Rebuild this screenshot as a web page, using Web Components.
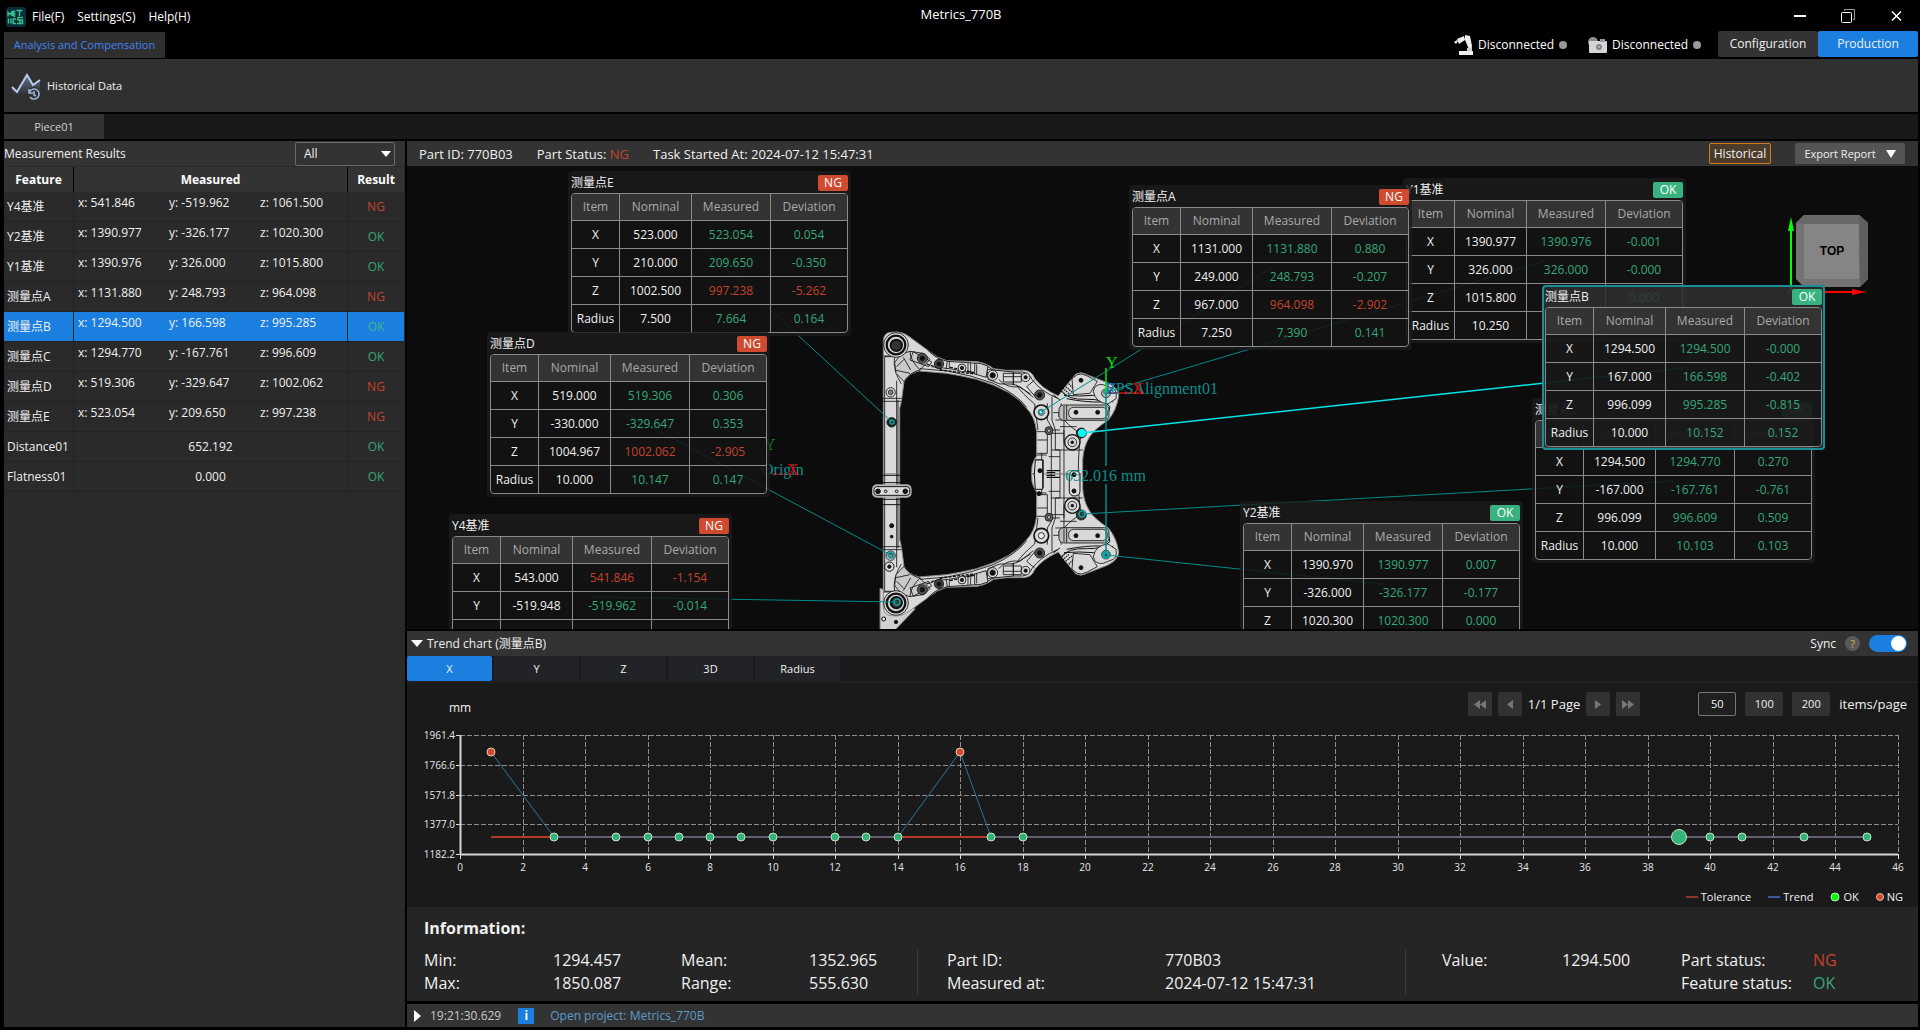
<!DOCTYPE html>
<html lang="en">
<head>
<meta charset="utf-8">
<title>Metrics_770B</title>
<style>
  html, body{
    margin: 0;
    height: 100%;
  }
  body{
    background: #000;
    color: #f0f0f0;
    font: 12px/16px "Open Sans", "Noto Sans CJK SC", sans-serif;
    --panel: #333;
    --blue: #1a7fdf;
    --ok: #34a877;
    --ng: #c5432c;
  }
</style>
</head>
<body>
<app-window>
  <title-bar slot="top">Metrics_770B</title-bar>
  <mode-bar slot="top"></mode-bar>
  <tool-ribbon slot="top">Historical Data</tool-ribbon>
  <piece-tabs slot="top">Piece01</piece-tabs>
  <result-list slot="side">Measurement Results</result-list>
  <part-bar slot="main"></part-bar>
  <scene-view slot="main"></scene-view>
  <trend-panel slot="main">Trend chart (测量点B)</trend-panel>
  <info-panel slot="main">Information:</info-panel>
  <status-bar slot="main">Open project: Metrics_770B</status-bar>
</app-window>

<script>
const baseStyle = `
  *{
    box-sizing: border-box;
  }
  button, select{
    font: inherit;
    color: inherit;
    border: 0;
    padding: 0;
    margin: 0;
    background: none;
  }
  .ok{ color: var(--ok); }
  .ng{ color: var(--ng); }
`;

function template(html){
  const t = document.createElement('template');
  t.innerHTML = '<style>' + baseStyle + '</style>' + html;
  return t;
}

class BaseElement extends HTMLElement{
  constructor(){
    super();
    this.attachShadow({mode: 'open'});
    this.shadowRoot.appendChild(this.constructor.template.content.cloneNode(true));
  }
  find(selector){
    return this.shadowRoot.querySelector(selector);
  }
}

/* ---------- window frame ---------- */
class AppWindow extends BaseElement{
  static template = template(`
    <style>
      :host{
        display: flex;
        flex-direction: column;
        height: 100vh;
        min-height: 800px;
        padding: 0 2px 3px 4px;
        box-sizing: border-box;
        overflow: hidden;
      }
      .body{
        flex: 1;
        min-height: 0;
        display: flex;
        gap: 2px;
      }
      .side{
        flex: 0 0 401px;
        display: flex;
        background: #2a2a2a;
      }
      .main{
        flex: 1;
        min-width: 0;
        display: flex;
        flex-direction: column;
      }
    </style>
    <slot name="top"></slot>
    <div class="body">
      <div class="side"><slot name="side"></slot></div>
      <div class="main"><slot name="main"></slot></div>
    </div>
  `);
}

class TitleBar extends BaseElement{
  static template = template(`
    <style>
      :host{
        display: grid;
        grid-template-columns: 1fr auto 1fr;
        align-items: center;
        height: 31px;
        color: #fff;
      }
      .menu{
        display: flex;
        align-items: center;
        gap: 13px;
        padding: 2px 0 0 2px;
      }
      .menu svg{
        margin-right: -7px;
      }
      .title{
        padding-bottom: 4px;
        font-size: 13px;
      }
      .win{
        display: flex;
        justify-content: flex-end;
        gap: 30px;
        padding-right: 13px;
      }
      .win button{
        display: flex;
        width: 18px;
        height: 18px;
      }
    </style>
    <nav class="menu">
      <svg width="20" height="20" viewBox="0 0 20 20" aria-label="Metrics">
        <rect width="20" height="20" rx="3" fill="#0a2e38"/>
        <g fill="none" stroke="#36c08c" stroke-width="1.5">
          <path d="M2 9.500V5.500l2 2 2-2.500v4M9.500 4.500H7.500v4.500h2M7.500 6.700h2M10.500 3.500h6M13.500 3.500v5.500"/>
          <path d="M2.500 11.500v5M4.500 12h1M5 12v4.500M10 12H7.200v4.500H10M17 10.500h-5v2.500h4.500v3.500h-5.500M14 13v3.500"/>
        </g>
      </svg>
      <button>File(F)</button>
      <button>Settings(S)</button>
      <button>Help(H)</button>
    </nav>
    <div class="title"><slot></slot></div>
    <div class="win">
      <button aria-label="Minimize"><svg width="18" height="18"><path d="M3 9h12" stroke="#fff" stroke-width="2"/></svg></button>
      <button aria-label="Restore"><svg width="18" height="18" fill="none"><path d="M5.500 4V2.500h10v10H14" stroke="#999"/><rect x="2.500" y="5.500" width="10" height="10" rx="1" stroke="#fff"/></svg></button>
      <button aria-label="Close"><svg width="18" height="18"><path d="M5 4.500l9 9M14 4.500l-9 9" stroke="#fff" stroke-width="1.500"/></svg></button>
    </div>
  `);
}

class ModeBar extends BaseElement{
  static template = template(`
    <style>
      :host{
        display: flex;
        align-items: stretch;
        height: 28px;
      }
      .tab{
        width: 161px;
        height: 26px;
        margin-top: 1px;
        background: #2f2f2f;
        color: #4083f5;
        font-size: 11px;
      }
      .devices{
        margin-left: auto;
        display: flex;
        align-items: center;
        gap: 21px;
        padding-right: 17px;
        color: #fff;
      }
      .device{
        display: flex;
        align-items: center;
        gap: 5px;
      }
      .device i{
        width: 8px;
        height: 8px;
        border-radius: 50%;
        background: #999;
      }
      .mode{
        width: 100px;
        height: 26px;
        background: var(--panel);
        border-radius: 2px;
      }
      .mode.on{
        background: var(--blue);
      }
    </style>
    <button class="tab">Analysis and Compensation</button>
    <div class="devices">
      <div class="device">
        <svg width="19" height="20" viewBox="0 0 19 20" fill="#eee">
          <path d="M11 0l5 1 2 10-4 1-3-7z"/><path d="M3 4l7-3 1 4-6 4z"/><path d="M0 7l3-2 1 1-2 3z"/>
          <circle cx="16" cy="12" r="2"/><path d="M13 13h5v3h-5z" fill="#ccc"/><path d="M5 16h14v4H5z"/>
        </svg>
        Disconnected<i></i>
      </div>
      <div class="device">
        <svg width="19" height="18" viewBox="0 0 19 18">
          <circle cx="5" cy="6" r="5" fill="#8d8d8d"/><rect x="1" y="5" width="18" height="12" rx="1" fill="#d5d5d5"/>
          <rect x="12" y="3" width="5" height="3" fill="#999"/><circle cx="11" cy="11" r="3" fill="#858585"/><circle cx="11" cy="11" r="1" fill="#bbb"/>
        </svg>
        Disconnected<i></i>
      </div>
    </div>
    <button class="mode">Configuration</button>
    <button class="mode on">Production</button>
  `);
}

class ToolRibbon extends BaseElement{
  static template = template(`
    <style>
      :host{
        display: flex;
        align-items: center;
        height: 53px;
        background: #303030;
      }
      button{
        display: flex;
        align-items: center;
        gap: 6px;
        padding-left: 7px;
        font-size: 11px;
      }
    </style>
    <button>
      <svg width="30" height="28" viewBox="0 0 30 28" fill="none">
        <linearGradient id="g" x1="0" y1="0" x2="0" y2="1"><stop offset="0" stop-color="#7f9cc8" stop-opacity=".6"/><stop offset="1" stop-color="#7f9cc8" stop-opacity="0"/></linearGradient>
        <path d="M1 15l5 5 10-17 6 11 7-6v15H1z" fill="url(#g)"/>
        <path d="M1 15l5 5L16 3l6 10 7-5" stroke="#b9cdf0" stroke-width="2"/>
        <circle cx="23" cy="22" r="7" fill="#303030"/>
        <path d="M18.500 20a5 5 0 1 1 .5 5M18 17v4h4M23 19v4l2 1" stroke="#9db6e0" stroke-width="1.600"/>
      </svg>
      <slot></slot>
    </button>
  `);
}

class PieceTabs extends BaseElement{
  static template = template(`
    <style>
      :host{
        display: block;
        height: 25px;
        margin: 2px 0;
        background: #191919;
      }
      button{
        width: 100px;
        height: 25px;
        background: var(--panel);
        color: #d0d0d0;
        font-size: 11px;
      }
    </style>
    <button><slot></slot></button>
  `);
}

/* ---------- left column ---------- */
const results = [
  ['Y4基准', '541.846', '-519.962', '1061.500', 'NG'],
  ['Y2基准', '1390.977', '-326.177', '1020.300', 'OK'],
  ['Y1基准', '1390.976', '326.000', '1015.800', 'OK'],
  ['测量点A', '1131.880', '248.793', '964.098', 'NG'],
  ['测量点B', '1294.500', '166.598', '995.285', 'OK'],
  ['测量点C', '1294.770', '-167.761', '996.609', 'OK'],
  ['测量点D', '519.306', '-329.647', '1002.062', 'NG'],
  ['测量点E', '523.054', '209.650', '997.238', 'NG'],
  ['Distance01', '652.192', 'OK'],
  ['Flatness01', '0.000', 'OK']
];

class ResultList extends BaseElement{
  static template = template(`
    <style>
      :host{
        flex: 1;
        display: block;
      }
      header{
        display: flex;
        align-items: center;
        justify-content: space-between;
        height: 25px;
        padding-right: 10px;
        background: var(--panel);
      }
      .pick{
        position: relative;
        display: flex;
      }
      select{
        appearance: none;
        width: 100px;
        height: 24px;
        padding-left: 8px;
        border: 1px solid #6a6a6a;
        border-radius: 2px;
        background: var(--panel);
      }
      .pick svg{
        position: absolute;
        right: 4px;
        top: 9px;
        pointer-events: none;
      }
      table{
        width: 400px;
        border-collapse: separate;
        border-spacing: 0;
        table-layout: fixed;
        margin-top: 1px;
      }
      th{
        height: 25px;
        padding: 0;
        background: var(--panel);
        border-right: 1px solid #000;
        color: #fff;
      }
      td{
        height: 30px;
        padding: 0 0 0 3px;
        border-right: 1px solid #222;
        border-bottom: 1px solid #222;
      }
      th:last-child, td:last-child{
        border-right: 0;
      }
      td:last-child, td.one{
        padding: 0;
        text-align: center;
      }
      .xyz{
        display: grid;
        grid-template-columns: 91px 91px 1fr;
        height: 29px;
        padding: 3px 0 0 1px;
      }
      tr.on td{
        background: var(--blue);
        background-clip: padding-box;
      }
      tr.on .ok{
        color: #3dbb88;
      }
    </style>
    <header>
      <label for="filter"><slot></slot></label>
      <span class="pick">
        <select id="filter"><option>All</option></select>
        <svg width="10" height="6"><path d="M0 0h10L5 6z" fill="#fff"/></svg>
      </span>
    </header>
    <table>
      <colgroup><col style="width:70px"><col style="width:274px"><col></colgroup>
      <thead><tr><th>Feature</th><th>Measured</th><th>Result</th></tr></thead>
      <tbody></tbody>
    </table>
  `);

  connectedCallback(){
    this.find('tbody').innerHTML = results.map((r) => {
      const state = r[r.length - 1];
      const value = r.length === 5
        ? `<td><div class="xyz"><span>x: ${r[1]}</span><span>y: ${r[2]}</span><span>z: ${r[3]}</span></div></td>`
        : `<td class="one">${r[1]}</td>`;
      return `<tr class="${r[0] === '测量点B' ? 'on' : ''}"><td>${r[0]}</td>${value}<td class="${state.toLowerCase()}">${state}</td></tr>`;
    }).join('');
  }
}

/* ---------- part header ---------- */
class PartBar extends BaseElement{
  static template = template(`
    <style>
      :host{
        display: flex;
        align-items: center;
        height: 25px;
        padding: 0 13px 0 12px;
        gap: 24px;
        background: var(--panel);
        font-size: 13px;
      }
      .hist{
        margin-left: auto;
        width: 62px;
        height: 21px;
        font-size: 12px;
        line-height: 19px;
        text-align: center;
        border: 1px solid #d07a1c;
        border-radius: 2px;
        background: #4c3b2b;
      }
      button{
        display: flex;
        align-items: center;
        justify-content: center;
        gap: 10px;
        width: 110px;
        height: 21px;
        font-size: 11px;
        background: #545454;
        border-radius: 2px;
      }
    </style>
    <span>Part ID: 770B03</span>
    <span>Part Status: <span class="ng">NG</span></span>
    <span>Task Started At: 2024-07-12 15:47:31</span>
    <span class="hist">Historical</span>
    <button>Export Report <svg width="10" height="8"><path d="M0 0h10L5 8z" fill="#fff"/></svg></button>
  `);
}

/* ---------- 3D scene ---------- */
class FeatureCard extends BaseElement{
  static template = template(`
    <style>
      :host{
        position: absolute;
        display: block;
        width: 283px;
        padding: 0 3px 3px;
        box-sizing: border-box;
        border-radius: 4px;
        background: rgba(28, 28, 28, .8);
      }
      :host([selected]){
        background: rgba(48, 48, 48, .86);
        box-shadow: inset 0 0 0 2px #188f94;
      }
      header{
        display: flex;
        align-items: center;
        justify-content: space-between;
        height: 22px;
        padding-top: 1px;
      }
      .badge{
        width: 30px;
        border-radius: 2px;
        text-align: center;
        color: #fff;
        background: #d04a30;
      }
      .badge.good{
        background: #3ab27f;
      }
      .frame{
        border: 1px solid #8a8a8a;
        border-radius: 4px;
        overflow: hidden;
      }
      table{
        width: 100%;
        border-collapse: separate;
        border-spacing: 0;
        table-layout: fixed;
        text-align: center;
      }
      th{
        height: 26px;
        padding: 0;
        font-weight: normal;
        color: #a9a9a9;
        background: var(--panel);
      }
      td{
        height: 28px;
        padding: 0;
        border-top: 1px solid #8a8a8a;
        background: rgba(8, 8, 8, .35);
      }
      :host([selected]) td{
        background: rgba(12, 12, 12, .6);
      }
      th + th, td + td{
        border-left: 1px solid #8a8a8a;
      }
    </style>
    <header><slot></slot><span class="badge"></span></header>
    <div class="frame">
      <table>
        <colgroup><col style="width:47px"><col style="width:72px"><col style="width:79px"><col></colgroup>
        <thead><tr><th>Item</th><th>Nominal</th><th>Measured</th><th>Deviation</th></tr></thead>
        <tbody></tbody>
      </table>
    </div>
  `);

  set data(card){
    this.textContent = card.name;
    const badge = this.find('.badge');
    badge.textContent = card.state;
    badge.classList.toggle('good', card.state === 'OK');
    this.toggleAttribute('selected', !!card.selected);
    this.style.left = card.x + 'px';
    this.style.top = card.y + 'px';
    this.find('tbody').innerHTML = card.rows.map((row) => {
      const [item, nominal, measured, deviation, bad] = row;
      const cls = bad ? 'ng' : 'ok';
      return `<tr><td>${item}</td><td>${nominal}</td><td class="${cls}">${measured}</td><td class="${cls}">${deviation}</td></tr>`;
    }).join('');
  }
}

// x, y: card corner in the scene; to: the point on the part the leader ends at
const cards = [
  {name: '测量点E', state: 'NG', x: 161, y: 5, to: [485, 256], rows: [
    ['X', '523.000', '523.054', '0.054'], ['Y', '210.000', '209.650', '-0.350'],
    ['Z', '1002.500', '997.238', '-5.262', true], ['Radius', '7.500', '7.664', '0.164']]},
  {name: '测量点D', state: 'NG', x: 80, y: 166, to: [484, 389], rows: [
    ['X', '519.000', '519.306', '0.306'], ['Y', '-330.000', '-329.647', '0.353'],
    ['Z', '1004.967', '1002.062', '-2.905', true], ['Radius', '10.000', '10.147', '0.147']]},
  {name: 'Y4基准', state: 'NG', x: 42, y: 348, to: [490, 436], rows: [
    ['X', '543.000', '541.846', '-1.154', true], ['Y', '-519.948', '-519.962', '-0.014'],
    ['', '', '', ''], ['', '', '', '']]},
  {name: 'Y1基准', state: 'OK', x: 996, y: 12, to: [699, 226], rows: [
    ['X', '1390.977', '1390.976', '-0.001'], ['Y', '326.000', '326.000', '-0.000'],
    ['Z', '1015.800', '', '0.000'], ['Radius', '10.250', '', '']]},
  {name: '测量点A', state: 'NG', x: 722, y: 19, to: [634, 246], rows: [
    ['X', '1131.000', '1131.880', '0.880'], ['Y', '249.000', '248.793', '-0.207'],
    ['Z', '967.000', '964.098', '-2.902', true], ['Radius', '7.250', '7.390', '0.141']]},
  {name: 'Y2基准', state: 'OK', x: 833, y: 335, to: [699, 389], rows: [
    ['X', '1390.970', '1390.977', '0.007'], ['Y', '-326.000', '-326.177', '-0.177'],
    ['Z', '1020.300', '1020.300', '0.000'], ['', '', '', '']]},
  {name: '测量点C', state: 'OK', x: 1125, y: 232, to: [675, 348], rows: [
    ['X', '1294.500', '1294.770', '0.270'], ['Y', '-167.000', '-167.761', '-0.761'],
    ['Z', '996.099', '996.609', '0.509'], ['Radius', '10.000', '10.103', '0.103']]},
  {name: '测量点B', state: 'OK', x: 1135, y: 119, to: [675, 267], selected: true, rows: [
    ['X', '1294.500', '1294.500', '-0.000'], ['Y', '167.000', '166.598', '-0.402'],
    ['Z', '996.099', '995.285', '-0.815'], ['Radius', '10.000', '10.152', '0.152']]}
];

class SceneView extends BaseElement{
  static template = template(`
    <style>
      :host{
        flex: 1;
        min-height: 0;
        display: block;
        position: relative;
        overflow: hidden;
        background: #0c0c0c;
      }
      svg{
        position: absolute;
        left: 0;
        top: 0;
      }
      .cube{
        left: auto;
        right: 41px;
        top: 44px;
      }
      text{
        font: 16px "Liberation Serif", serif;
      }
      .cube text{
        font: bold 12px "Liberation Sans", sans-serif;
      }
    </style>
    <svg width="1510" height="464">
      <defs>
        <g id="half" stroke="#111" stroke-width="2.500" fill="#d9d9d9" stroke-linejoin="round">
          <!-- frame outline -->
          <path d="M70 462V62Q72 38 92 37L112 36Q135 38 150 52L205 92Q230 114 260 122L352 125Q385 132 400 146L440 151H490Q515 152 524 175Q545 205 595 228L612 205L648 162Q664 154 680 164L742 188Q776 205 776 228Q770 270 745 300Q700 330 688 352Q670 380 668 420V462H515L516 440Q520 420 530 408V335Q525 290 500 265Q480 238 445 217Q400 192 350 178Q300 166 260 160L178 153Q148 158 132 185L124 245L119 265V462Z" stroke="#8e8e8e" stroke-width="3"/>
          <path d="M74 462V110H104Q100 130 106 150Q112 175 124 192M110 182V462M114 240V462M70 108H110M66 235H124M66 244H124" fill="none"/>
          <path d="M104 128Q120 100 150 94L190 100L210 118L180 150Q150 156 132 185L108 160Z" fill="#c9c9c9"/>
          <path d="M130 112L152 150M150 94Q150 120 180 150M110 140L132 118M104 150L150 160" fill="none"/>
          <path d="M205 92Q230 118 262 124L352 130Q380 134 400 150L440 156H488Q508 160 516 178Q540 212 592 235M180 146L262 153Q330 164 400 190Q470 222 500 262M215 140L268 146L345 160L470 196L512 222" fill="none"/>
          <path d="M200 132L250 150M240 150L345 162M270 142L380 166" fill="none" stroke-dasharray="9 4" stroke-width="4"/>
          <path d="M160 95L215 126L206 140L150 120Z" fill="none"/>
          <path d="M262 124L258 148M268 126V146M324 128V160M332 128V162M344 130V162L378 172L384 138L360 130ZM350 134V164" fill="#cfcfcf"/>
          <path d="M382 148L420 152L460 156V192H420L384 178Z"/>
          <path d="M430 160H484V186H430ZM430 170H484M460 158V196" fill="none"/>
          <path d="M416 178Q440 206 480 200L520 232M470 196Q486 220 524 252M524 180L500 200L526 230M524 252Q530 300 534 330" fill="none"/>
          <path d="M530 335H562V400H532M532 360H562M545 400V462M524 420H550V462H520M562 250V300L574 320V462M576 230V300L586 330V390M586 300H612V462M586 390H600V462M600 320H650M604 250L596 290M612 300Q640 330 664 340M612 330V370M664 340Q655 380 655 462M580 278H620M562 330H600M574 390H668M566 410H600M574 340H612M530 405H560" fill="none"/>
          <path d="M560 452H600M560 458H586" fill="none" stroke-width="4"/>
          <path d="M604 212Q620 240 680 238Q730 236 750 260L740 300M612 226Q660 230 700 226Q740 224 760 246M620 236Q680 248 730 246M600 240L580 225" fill="none" stroke-width="3"/>
          <path d="M600 210L622 228M608 204L628 222M612 196L636 216M622 186L640 206" fill="none" stroke-width="4" stroke-dasharray="4 3"/>
          <path d="M636 176L652 164Q664 158 682 168L712 184L690 220L640 224Z"/>
          <path d="M700 214Q704 190 730 194L760 206Q772 214 768 236L744 252Q706 248 700 214Z"/>
          <!-- slotted plate -->
          <rect x="597" y="255" width="150" height="46" rx="14" fill="#bdbdbd"/>
          <rect x="626" y="262" width="116" height="34" rx="15"/>
          <path d="M612 258V298M620 256V300" fill="none"/>
          <!-- bushings and bolts -->
          <circle cx="108" cy="75" r="37"/>
          <circle cx="108" cy="75" r="28" stroke-width="7"/>
          <circle cx="109" cy="76" r="17" fill="#333" stroke-width="6"/>
          <circle cx="187" cy="115" r="15" fill="#555"/><circle cx="187" cy="115" r="7" fill="#111"/>
          <circle cx="237" cy="132" r="14" fill="#444"/><circle cx="237" cy="132" r="6" fill="#111"/>
          <circle cx="306" cy="144" r="12"/><circle cx="306" cy="144" r="5" fill="#222"/>
          <circle cx="398" cy="166" r="15"/><circle cx="398" cy="166" r="8" fill="#111"/>
          <circle cx="497" cy="172" r="13"/><circle cx="497" cy="172" r="5" fill="#111"/>
          <circle cx="539" cy="225" r="15" fill="#555"/><circle cx="539" cy="225" r="7" fill="#111"/>
          <circle cx="544" cy="277" r="22" stroke-width="5"/><circle cx="544" cy="277" r="9" fill="#eee"/>
          <circle cx="567" cy="332" r="12" fill="#666"/><circle cx="567" cy="332" r="5" fill="#ccc"/>
          <circle cx="648" cy="277" r="6" fill="#111"/><circle cx="713" cy="277" r="6" fill="#111"/>
          <circle cx="664" cy="339" r="15" fill="#333"/>
          <circle cx="637" cy="367" r="23" stroke-width="4"/><circle cx="637" cy="367" r="13"/><circle cx="637" cy="367" r="4" fill="#111"/>
          <circle cx="663" cy="181" r="6" fill="#111"/>
          <circle cx="738" cy="220" r="13" fill="#bbb"/>
          <circle cx="92" cy="217" r="14"/><circle cx="92" cy="217" r="7" fill="#888"/>
        </g>
      </defs>
      <g transform="translate(453 154) scale(.3333)">
        <path d="M60 805V930H105L165 868L130 830Z" fill="#d0d0d0" stroke="#777" stroke-width="3"/>
        <use href="#half"/>
        <use href="#half" transform="translate(0 924) scale(1 -1)"/>
        <g stroke="#111" stroke-width="3" fill="#dcdcdc">
          <path d="M66 466H120M66 488H122M66 538H122M66 554H120"/>
          <rect x="38" y="495" width="115" height="36" rx="12" stroke="#aaa" stroke-width="4"/>
          <rect x="42" y="500" width="107" height="26" rx="8"/>
          <rect x="628" y="452" width="32" height="76" rx="14"/>
          <circle cx="54" cy="514" r="7" fill="#111"/><circle cx="136" cy="514" r="7" fill="#111"/>
          <circle cx="77" cy="514" r="4"/><circle cx="110" cy="514" r="4"/>
          <path d="M526 420Q520 462 526 508H548V420Z"/>
          <circle cx="540" cy="452" r="6" fill="#111"/><circle cx="537" cy="521" r="6" fill="#111"/>
          <circle cx="642" cy="464" r="6" fill="#111"/><circle cx="642" cy="513" r="6" fill="#111"/>
          <circle cx="95" cy="307" r="14" fill="#222"/><circle cx="95" cy="617" r="6" fill="#111"/>
          <circle cx="95" cy="650" r="4" fill="#111"/>
          <circle cx="88" cy="740" r="14"/><circle cx="88" cy="740" r="5" fill="#111"/>
          <circle cx="71" cy="897" r="6"/><circle cx="108" cy="906" r="5" fill="#111"/>
        </g>
      </g>
      <g class="leaders" fill="none" stroke="#008b8b"></g>
      <path d="M699 226V300M699 318V389" stroke="#008b8b" stroke-width="1.500"/>
      <g fill="#12a0a0">
        <circle cx="675" cy="267" r="4" fill="#00ffff"/>
        <circle cx="699" cy="389" r="4"/><circle cx="699" cy="389" r="1" fill="#033"/>
      </g>
      <g fill="none" stroke="#12a0a0" stroke-width="1.500">
        <circle cx="485" cy="256" r="2"/><circle cx="484" cy="389" r="3"/><circle cx="490" cy="436" r="3"/>
        <circle cx="634" cy="246" r="2"/><circle cx="675" cy="348" r="3"/><circle cx="699" cy="226" r="2"/>
      </g>
      <g fill="#0d8c8c">
        <text x="658" y="315">652.016 mm</text>
        <path d="M699 202V227" stroke="#00e000" stroke-width="1.500"/>
        <path d="M699 227H732" stroke="#e00000" stroke-width="1.500"/>
        <text x="699" y="202" fill="#00e000">Y</text>
        <text x="700" y="228" fill="#2040e0">Z</text>
        <text x="698" y="228">RPSAlignment01</text>
        <text x="725" y="228" fill="#e00000">X</text>
        <path d="M355 284V304" stroke="#008000"/>
        <path d="M365 308H385" stroke="#e00000"/>
        <text x="357" y="284" fill="#0c9c0c">Y</text>
        <text x="355" y="309">Origin</text>
        <text x="380" y="309" fill="#e00000">X</text>
      </g>
    </svg>
    <svg class="cube" width="90" height="90">
      <path d="M17 5H72L81 13V69L73 77H17L9 69V13Z" fill="#737373"/>
      <path d="M17 5H72L81 13L73 14H17L9 13Z" fill="#686868"/>
      <path d="M72 5L81 13V69L73 77Z" fill="#5f5f5f"/>
      <rect x="17" y="14" width="55" height="55" fill="#858585"/>
      <text x="45" y="45" text-anchor="middle" fill="#000">TOP</text>
      <path d="M4 82H75" stroke="#f00" stroke-width="2"/><path d="M65 79L79 82L65 85Z" fill="#f00"/>
      <path d="M4 81V15" stroke="#0f0" stroke-width="2"/><path d="M1 21L4 7L7 21Z" fill="#0f0"/>
      <circle cx="3" cy="82" r="3" fill="#2a2a5c"/>
    </svg>
  `);

  connectedCallback(){
    this.find('.leaders').innerHTML = cards.map((c) =>
      `<path d="M${c.x + 142} ${c.y + 83}L${c.to[0]} ${c.to[1]}"${c.selected ? ' stroke="#00e5e5" stroke-width="1.500"' : ''}/>`
    ).join('');
    cards.forEach((c) => {
      const card = document.createElement('feature-card');
      card.data = c;
      this.shadowRoot.appendChild(card);
    });
  }
}

/* ---------- trend ---------- */
class TrendPanel extends BaseElement{
  static template = template(`
    <style>
      :host{
        display: block;
        margin-top: 2px;
        background: #1a1a1a;
      }
      header{
        display: flex;
        align-items: center;
        gap: 4px;
        height: 25px;
        padding: 0 11px 0 4px;
        background: var(--panel);
      }
      .sync{
        display: flex;
        align-items: center;
        gap: 9px;
        margin-left: auto;
      }
      .help{
        width: 15px;
        height: 15px;
        border-radius: 50%;
        background: #5a5a5a;
        color: #e0b040;
        font-size: 11px;
        line-height: 15px;
      }
      input{
        appearance: none;
        display: flex;
        align-items: center;
        justify-content: flex-end;
        width: 38px;
        height: 17px;
        margin: 0;
        padding: 1px;
        border-radius: 9px;
        background: var(--blue);
      }
      input::before{
        content: "";
        width: 15px;
        height: 15px;
        border-radius: 50%;
        background: #fff;
      }
      nav{
        display: flex;
        gap: 2px;
        height: 27px;
        border-bottom: 2px solid #202020;
      }
      nav button{
        width: 85px;
        height: 25px;
        background: #222327;
        font-size: 11px;
      }
      nav .on{
        background: var(--blue);
        border-radius: 2px;
      }
    </style>
    <header>
      <svg width="12" height="8"><path d="M0 0h12L6 7z" fill="#fff"/></svg>
      <slot></slot>
      <div class="sync">
        <label for="sync">Sync</label>
        <button class="help">?</button>
        <input type="checkbox" id="sync" checked>
      </div>
    </header>
    <nav>
      <button class="on">X</button><button>Y</button><button>Z</button><button>3D</button><button>Radius</button>
    </nav>
    <trend-chart></trend-chart>
  `);
}

class TrendChart extends BaseElement{
  static template = template(`
    <style>
      :host{
        display: block;
        height: 224px;
        padding-top: 9px;
        box-sizing: border-box;
      }
      .tools{
        display: flex;
        align-items: center;
        height: 24px;
        padding: 0 11px 0 42px;
        font-size: 13px;
      }
      .unit{
        align-self: flex-end;
        font-size: 12px;
      }
      .pages{
        display: flex;
        align-items: center;
        gap: 6px;
        margin-left: auto;
        margin-right: 58px;
      }
      .pages button{
        display: flex;
        align-items: center;
        justify-content: center;
        width: 24px;
        height: 24px;
        border-radius: 2px;
        background: #323232;
      }
      .sizes{
        display: flex;
        align-items: center;
        gap: 9px;
      }
      .sizes button{
        width: 38px;
        height: 24px;
        border-radius: 2px;
        background: #323232;
        font-size: 11px;
      }
      .sizes .on{
        border: 1px solid #777;
        background: #1f1f1f;
      }
      .plot{
        display: block;
        width: 100%;
        height: 173px;
      }
      .plot text{
        font-size: 10px;
        fill: #e6e6e6;
      }
      .legend{
        display: flex;
        justify-content: flex-end;
        gap: 17px;
        padding-right: 15px;
        font-size: 11px;
        height: 16px;
      }
      .legend span{
        display: flex;
        align-items: center;
        gap: 3px;
      }
    </style>
    <div class="tools">
      <span class="unit">mm</span>
      <div class="pages">
        <button aria-label="First page"><svg width="12" height="9" fill="#777"><path d="M6 0v9L0 4.500zM12 0v9L6 4.500z"/></svg></button>
        <button aria-label="Previous page"><svg width="6" height="9" fill="#777"><path d="M6 0v9L0 4.500z"/></svg></button>
        <span>1/1 Page</span>
        <button aria-label="Next page"><svg width="6" height="9" fill="#777"><path d="M0 0v9l6-4.500z"/></svg></button>
        <button aria-label="Last page"><svg width="12" height="9" fill="#777"><path d="M0 0v9l6-4.500zM6 0v9l6-4.500z"/></svg></button>
      </div>
      <div class="sizes">
        <button class="on">50</button><button>100</button><button>200</button><span>items/page</span>
      </div>
    </div>
    <svg class="plot"></svg>
    <div class="legend">
      <span><svg width="12" height="2"><path d="M0 1h12" stroke="#8c3528" stroke-width="2"/></svg>Tolerance</span>
      <span><svg width="12" height="2"><path d="M0 1h12" stroke="#3c5aa0" stroke-width="2"/></svg>Trend</span>
      <span><svg width="10" height="10"><circle cx="5" cy="5" r="4" fill="#0f0" stroke="#bfe8bf"/></svg>OK</span>
      <span><svg width="8" height="10"><circle cx="4" cy="5" r="3.500" fill="#d04a30" stroke="#e8c0a8"/></svg>NG</span>
    </div>
  `);

  connectedCallback(){
    this.draw();
    window.addEventListener('resize', () => this.draw());
  }

  draw(){
    const svg = this.find('.plot');
    const left = 53;
    const right = svg.clientWidth - 20;
    const ticks = ['1961.4', '1766.6', '1571.8', '1377.0', '1182.2'];
    const rows = [19, 49, 79, 108, 138];
    const x = (n) => Math.round(left + (right - left) * n / 46);
    const ok = 121;
    const ng = 36;
    let out = '';

    ticks.forEach((label, i) => {
      out += `<text x="${left - 5}" y="${rows[i] + 4}" text-anchor="end">${label}</text>`;
      out += `<path d="M${left - 4} ${rows[i] + .5}H${left}" stroke="#ddd"/>`;
      if (i < 4){
        out += `<path d="M${left} ${rows[i] + .5}H${right}" stroke="#8c8c8c" stroke-dasharray="5 2"/>`;
      }
    });
    for (let n = 0; n <= 46; n += 2){
      if (n){
        out += `<path d="M${x(n) + .5} 19V138" stroke="#8c8c8c" stroke-dasharray="5 2"/>`;
      }
      out += `<path d="M${x(n) + .5} 138V143" stroke="#ddd"/>`;
      out += `<text x="${x(n)}" y="155" text-anchor="middle">${n}</text>`;
    }
    out += `<path d="M${left + .5} 19V138M${left} 138.5H${right}" stroke="#d5d5d5" stroke-width="2"/>`;
    out += `<path d="M${x(1)} ${ok}H${x(3)}M${x(14)} ${ok}H${x(17)}" stroke="#b23a28" stroke-width="2"/>`;
    out += `<path d="M${x(3)} ${ok}H${x(14)}M${x(17)} ${ok}H${x(45)}" stroke="#635e74" stroke-width="2"/>`;
    out += `<path d="M${x(1)} ${ng}L${x(3)} ${ok}M${x(14)} ${ok}L${x(16)} ${ng}L${x(17)} ${ok}" fill="none" stroke="#2a76a2"/>`;
    [3, 5, 6, 7, 8, 9, 10, 12, 13, 14, 17, 18, 39, 40, 41, 43, 45].forEach((n) => {
      out += `<circle cx="${x(n)}" cy="${ok}" r="${n === 39 ? 7.5 : 4}" fill="#34b27c" stroke="#c5e5b8"/>`;
    });
    [1, 16].forEach((n) => {
      out += `<circle cx="${x(n)}" cy="${ng}" r="4" fill="#d04a30" stroke="#ecd0a8"/>`;
    });
    svg.innerHTML = out;
  }
}

/* ---------- statistics ---------- */
class InfoPanel extends BaseElement{
  static template = template(`
    <style>
      :host{
        display: block;
        height: 94px;
        padding-top: 10px;
        box-sizing: border-box;
        background: #252525;
        font-size: 16px;
        line-height: 23px;
      }
      h2{
        margin: 0 0 9px 17px;
        font: inherit;
        font-weight: bold;
      }
      .row{
        display: grid;
        grid-template-columns: 510fr 488fr 513fr;
      }
      section{
        display: grid;
        height: 46px;
      }
      section + section{
        border-left: 1px solid #383838;
      }
      .stat{
        padding-left: 17px;
        grid-template-columns: 129px 128px 128px 1fr;
      }
      .part{
        padding-left: 29px;
        grid-template-columns: 218px 1fr;
      }
      .state{
        padding-left: 36px;
        grid-template-columns: 120px 119px 132px 1fr;
      }
    </style>
    <h2><slot></slot></h2>
    <div class="row">
      <section class="stat">
        <span>Min:</span><span>1294.457</span><span>Mean:</span><span>1352.965</span>
        <span>Max:</span><span>1850.087</span><span>Range:</span><span>555.630</span>
      </section>
      <section class="part">
        <span>Part ID:</span><span>770B03</span>
        <span>Measured at:</span><span>2024-07-12 15:47:31</span>
      </section>
      <section class="state">
        <span>Value:</span><span>1294.500</span><span>Part status:</span><span class="ng">NG</span>
        <span></span><span></span><span>Feature status:</span><span class="ok">OK</span>
      </section>
    </div>
  `);
}

class StatusBar extends BaseElement{
  static template = template(`
    <style>
      :host{
        display: flex;
        align-items: center;
        height: 23px;
        margin-top: 3px;
        padding-left: 7px;
        background: var(--panel);
        color: #c8c8c8;
      }
      time{
        margin: 0 17px 0 9px;
      }
      .info{
        width: 16px;
        margin-right: 16px;
        background: var(--blue);
        color: #fff;
        font-weight: bold;
        text-align: center;
      }
      .text{
        color: #5b9bc9;
      }
    </style>
    <svg width="7" height="12"><path d="M0 0l7 6-7 6z" fill="#fff"/></svg>
    <time>19:21:30.629</time>
    <span class="info">i</span>
    <span class="text"><slot></slot></span>
  `);
}

window.customElements.define('app-window', AppWindow);
window.customElements.define('title-bar', TitleBar);
window.customElements.define('mode-bar', ModeBar);
window.customElements.define('tool-ribbon', ToolRibbon);
window.customElements.define('piece-tabs', PieceTabs);
window.customElements.define('result-list', ResultList);
window.customElements.define('part-bar', PartBar);
window.customElements.define('feature-card', FeatureCard);
window.customElements.define('scene-view', SceneView);
window.customElements.define('trend-chart', TrendChart);
window.customElements.define('trend-panel', TrendPanel);
window.customElements.define('info-panel', InfoPanel);
window.customElements.define('status-bar', StatusBar);
</script>
</body>
</html>
